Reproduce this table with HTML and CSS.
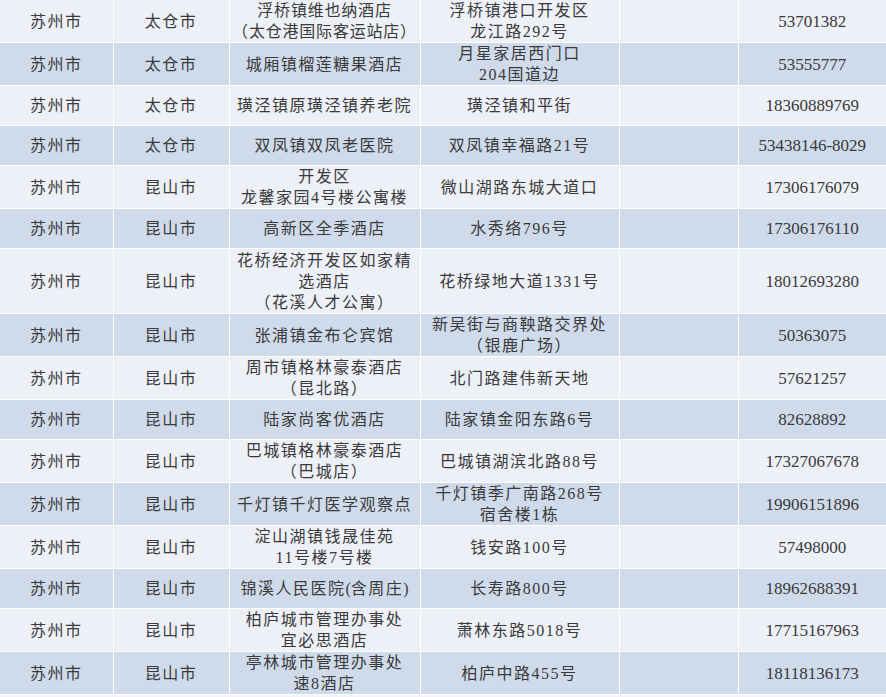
FILE: index.html
```html
<!DOCTYPE html>
<html lang="zh-CN">
<head>
<meta charset="utf-8">
<title>苏州市隔离点</title>
<link rel="stylesheet" href="styles.css">
</head>
<body>
<table class="sheet">
  <colgroup>
    <col class="c-city"><col class="c-dist"><col class="c-name"><col class="c-addr"><col class="c-blank"><col class="c-tel">
  </colgroup>
  <tbody>
    <tr class="odd two"><td>苏州市</td><td>太仓市</td><td class="narrow">浮桥镇维也纳酒店<br>（太仓港国际客运站店）</td><td>浮桥镇港口开发区<br>龙江路292号</td><td></td><td class="tel">53701382</td></tr>
    <tr class="even two"><td>苏州市</td><td>太仓市</td><td>城厢镇榴莲糖果酒店</td><td>月星家居西门口<br>204国道边</td><td></td><td class="tel">53555777</td></tr>
    <tr class="odd one"><td>苏州市</td><td>太仓市</td><td>璜泾镇原璜泾镇养老院</td><td>璜泾镇和平街</td><td></td><td class="tel">18360889769</td></tr>
    <tr class="even one"><td>苏州市</td><td>太仓市</td><td>双凤镇双凤老医院</td><td>双凤镇幸福路21号</td><td></td><td class="tel">53438146-8029</td></tr>
    <tr class="odd two"><td>苏州市</td><td>昆山市</td><td>开发区<br>龙馨家园4号楼公寓楼</td><td>微山湖路东城大道口</td><td></td><td class="tel">17306176079</td></tr>
    <tr class="even one"><td>苏州市</td><td>昆山市</td><td>高新区全季酒店</td><td>水秀络796号</td><td></td><td class="tel">17306176110</td></tr>
    <tr class="odd three"><td>苏州市</td><td>昆山市</td><td>花桥经济开发区如家精<br>选酒店<br>（花溪人才公寓）</td><td>花桥绿地大道1331号</td><td></td><td class="tel">18012693280</td></tr>
    <tr class="even two"><td>苏州市</td><td>昆山市</td><td>张浦镇金布仑宾馆</td><td>新吴街与商鞅路交界处<br>（银鹿广场）</td><td></td><td class="tel">50363075</td></tr>
    <tr class="odd two"><td>苏州市</td><td>昆山市</td><td>周市镇格林豪泰酒店<br>（昆北路）</td><td>北门路建伟新天地</td><td></td><td class="tel">57621257</td></tr>
    <tr class="even one"><td>苏州市</td><td>昆山市</td><td>陆家尚客优酒店</td><td>陆家镇金阳东路6号</td><td></td><td class="tel">82628892</td></tr>
    <tr class="odd two"><td>苏州市</td><td>昆山市</td><td>巴城镇格林豪泰酒店<br>（巴城店）</td><td>巴城镇湖滨北路88号</td><td></td><td class="tel">17327067678</td></tr>
    <tr class="even two"><td>苏州市</td><td>昆山市</td><td>千灯镇千灯医学观察点</td><td>千灯镇季广南路268号<br>宿舍楼1栋</td><td></td><td class="tel">19906151896</td></tr>
    <tr class="odd two"><td>苏州市</td><td>昆山市</td><td>淀山湖镇钱晟佳苑<br>11号楼7号楼</td><td>钱安路100号</td><td></td><td class="tel">57498000</td></tr>
    <tr class="even one"><td>苏州市</td><td>昆山市</td><td>锦溪人民医院<span class="tight">(</span>含周庄<span class="tight">)</span></td><td>长寿路800号</td><td></td><td class="tel">18962688391</td></tr>
    <tr class="odd two"><td>苏州市</td><td>昆山市</td><td>柏庐城市管理办事处<br>宜必思酒店</td><td>萧林东路5018号</td><td></td><td class="tel">17715167963</td></tr>
    <tr class="even two"><td>苏州市</td><td>昆山市</td><td>亭林城市管理办事处<br>速8酒店</td><td>柏庐中路455号</td><td></td><td class="tel">18118136173</td></tr>
  </tbody>
</table>
</body>
</html>
```

FILE: styles.css
```css
html, body {
  margin: 0;
  padding: 0;
  background: #f4f5f9;
}

.sheet {
  width: 886px;
  table-layout: fixed;
  border-collapse: collapse;
  font-family: "Liberation Serif", "Noto Sans CJK SC", serif;
  font-size: 16px;
  line-height: 21px;
  letter-spacing: 1.5px;
  color: #3a3a3a;
}

.c-city { width: 113px; }
.c-dist { width: 116px; }
.c-name { width: 191px; }
.c-addr { width: 199px; }
.c-blank { width: 119px; }
.c-tel { width: 148px; }

.sheet td {
  border: 1px solid #ffffff;
  padding: 0;
  text-align: center;
  vertical-align: middle;
  white-space: nowrap;
  overflow: hidden;
}

.sheet tr:first-child td { border-top: 0; }
.sheet td:first-child { border-left: 0; }
.sheet td:last-child { border-right: 0; }

.odd td { background: #edf0f7; }
.even td { background: #cfdaea; }

.one td { height: 39px; }
.two td { height: 42px; }
.three td { height: 64px; }

.sheet td.narrow { letter-spacing: 0.8px; }

.sheet td.tel {
  font-size: 17px;
  letter-spacing: 0;
}

.tight { letter-spacing: 0; }
```
